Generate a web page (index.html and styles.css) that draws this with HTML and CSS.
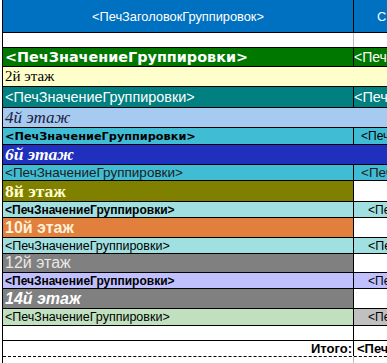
FILE: index.html
```html
<!DOCTYPE html>
<html lang="ru">
<head>
<meta charset="utf-8">
<title>Группировки</title>
<link rel="stylesheet" href="styles.css">
</head>
<body>
<div class="sheet">
  <div class="row r-head h32"><div class="c1 center">&lt;ПечЗаголовокГруппировок&gt;</div><div class="c2 head2">Сумма</div></div>
  <div class="row r-blank h14"><div class="c1 soft"></div><div class="c2"></div></div>
  <div class="row r-green h18"><div class="c1">&lt;ПечЗначениеГруппировки&gt;</div><div class="c2">&lt;ПечЗначение&gt;</div></div>
  <div class="row r-yellow h19"><div class="cs">2й этаж</div></div>
  <div class="row r-teal h20"><div class="c1">&lt;ПечЗначениеГруппировки&gt;</div><div class="c2">&lt;ПечЗначение&gt;</div></div>
  <div class="row r-lblue h19"><div class="cs">4й этаж</div></div>
  <div class="row r-cyan-b h16"><div class="c1">&lt;ПечЗначениеГруппировки&gt;</div><div class="c2 ind7">&lt;ПечЗначение&gt;</div></div>
  <div class="row r-dblue h19"><div class="cs">6й этаж</div></div>
  <div class="row r-cyan h15"><div class="c1">&lt;ПечЗначениеГруппировки&gt;</div><div class="c2 ind7">&lt;ПечЗначение&gt;</div></div>
  <div class="row r-olive h20"><div class="c1">8й этаж</div><div class="c2 white"></div></div>
  <div class="row r-lcyan-b h15"><div class="c1">&lt;ПечЗначениеГруппировки&gt;</div><div class="c2 ind14">&lt;ПечЗначение&gt;</div></div>
  <div class="row r-orange h19"><div class="c1">10й этаж</div><div class="c2 white"></div></div>
  <div class="row r-lcyan h15"><div class="c1">&lt;ПечЗначениеГруппировки&gt;</div><div class="c2 ind14">&lt;ПечЗначение&gt;</div></div>
  <div class="row r-gray h18"><div class="c1">12й этаж</div><div class="c2 white"></div></div>
  <div class="row r-lav h15"><div class="c1">&lt;ПечЗначениеГруппировки&gt;</div><div class="c2 ind14">&lt;ПечЗначение&gt;</div></div>
  <div class="row r-gray-bi h19"><div class="c1">14й этаж</div><div class="c2 white"></div></div>
  <div class="row r-lgreen h16"><div class="c1">&lt;ПечЗначениеГруппировки&gt;</div><div class="c2 ind14 silver">&lt;ПечЗначение&gt;</div></div>
  <div class="row r-blank h14"><div class="c1"></div><div class="c2"></div></div>
  <div class="row r-total h15"><div class="c1 right">Итого:</div><div class="c2 ind3">&lt;ПечЗначение&gt;</div></div>
  <div class="row tail"><div class="c1 soft"></div><div class="c2"></div></div>
</div>
</body>
</html>
```

FILE: styles.css
```css
html, body {
  margin: 0;
  padding: 0;
  overflow: hidden;
  background: #ffffff;
}

.sheet {
  margin-left: 2px;
  width: 434px;
  border-left: 1px solid #000;
  font-family: "Liberation Sans", Arial, sans-serif;
  font-size: 12px;
  color: #000;
}

.row {
  display: flex;
  border-bottom: 1px solid #000;
}

.c1, .c2, .cs {
  display: flex;
  align-items: center;
  white-space: nowrap;
  overflow: hidden;
  box-sizing: border-box;
}

.c1 {
  flex: none;
  width: 351px;
  padding-left: 2px;
  border-right: 1px solid #000;
}

.c2 {
  flex: none;
  width: 82px;
}

.cs {
  flex: none;
  width: 433px;
  padding-left: 2px;
}

.center { justify-content: center; padding-left: 0; }
.head2 { padding-left: 23px; letter-spacing: 3px; }
.right { justify-content: flex-end; padding-right: 1px; }
.soft { border-right-color: #c0c0c0; }
.white { background: #ffffff; }
.silver { background: #c0c0c0; }
.ind3 { padding-left: 3px; }
.ind7 { padding-left: 7px; }
.ind14 { padding-left: 14px; }

.h14 { height: 14px; }
.h15 { height: 15px; }
.h16 { height: 16px; }
.h18 { height: 18px; }
.h19 { height: 19px; }
.h20 { height: 20px; }
.h32 { height: 32px; }

.r-head { background: #0070c0; color: #ffffff; font-size: 12.8px; }
.r-blank { background: #ffffff; }

.r-green { background: #007800; color: #ffffff; }
.r-green .c1 { font-family: "DejaVu Sans", Verdana, sans-serif; font-weight: bold; font-size: 14.4px; }
.r-green .c2 { font-size: 14px; padding-left: 0; }

.r-yellow { background: #ffffcc; }
.r-yellow .cs { font-family: "Liberation Serif", "Times New Roman", serif; font-size: 15px; }

.r-teal { background: #008080; color: #ffffff; font-size: 14.4px; }

.r-lblue { background: #a6caf0; color: #202040; }
.r-lblue .cs { font-family: "Liberation Serif", serif; font-style: italic; font-size: 17px; }

.r-cyan-b { background: #40bcd4; }
.r-cyan-b .c1 { font-family: "DejaVu Sans", Verdana, sans-serif; font-weight: bold; font-size: 11.3px; }

.r-dblue { background: #1f30bf; color: #ffffff; }
.r-dblue .cs { font-family: "Liberation Serif", serif; font-style: italic; font-weight: bold; font-size: 17.5px; }

.r-cyan { background: #40bcd4; color: #202020; font-size: 13.5px; }

.r-olive .c1 { background: #808000; color: #ffffd0; font-family: "Liberation Serif", serif; font-weight: bold; font-size: 17.5px; }

.r-lcyan-b { background: #a0e0e0; }
.r-lcyan-b .c1 { font-weight: bold; font-size: 12px; }

.r-orange .c1 { background: #e0803c; color: #fff0d8; font-weight: bold; font-size: 16px; }

.r-lcyan { background: #a0e0e0; font-size: 12.5px; }

.r-gray .c1 { background: #808080; color: #e8e8e8; font-size: 16px; }

.r-lav { background: #c0c0ff; }
.r-lav .c1 { font-weight: bold; font-size: 12px; }

.r-gray-bi .c1 { background: #808080; color: #ffffff; font-weight: bold; font-style: italic; font-size: 16px; }

.r-lgreen .c1 { background: #c0e0c0; font-size: 12.5px; }

.r-total { border-bottom: 1px dashed #000; font-weight: bold; font-size: 13px; }

.tail { height: 20px; border-bottom: none; }
```
